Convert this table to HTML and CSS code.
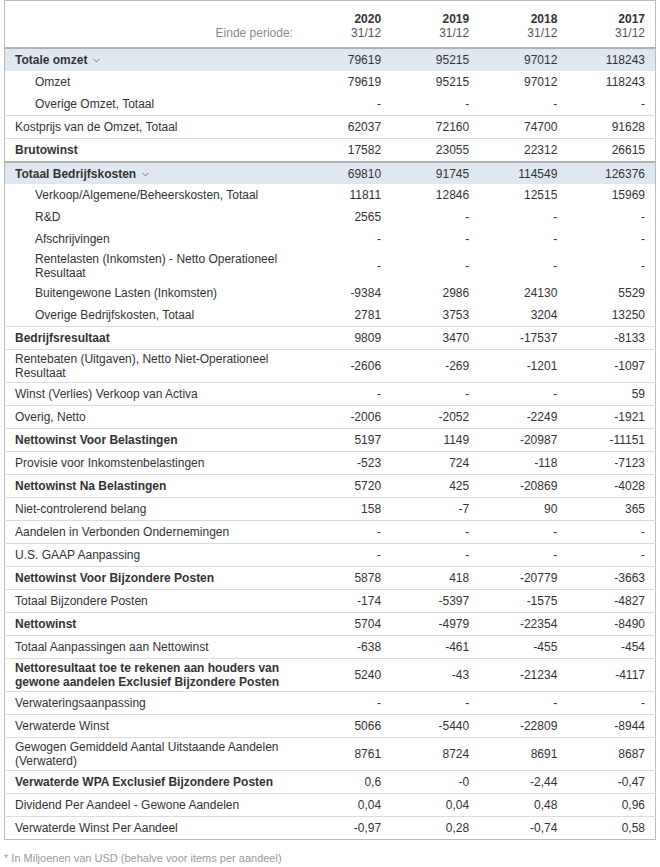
FILE: index.html
```html
<!DOCTYPE html>
<html lang="nl">
<head>
<meta charset="utf-8">
<title>Resultatenrekening</title>
<link rel="stylesheet" href="styles.css">
</head>
<body>
<table class="fin">
  <colgroup>
    <col class="c-label"><col class="c-num"><col class="c-num"><col class="c-num"><col class="c-num">
  </colgroup>
  <thead>
    <tr>
      <th class="lbl">Einde periode:</th>
      <th><span class="yr">2020</span><span class="dt">31/12</span></th>
      <th><span class="yr">2019</span><span class="dt">31/12</span></th>
      <th><span class="yr">2018</span><span class="dt">31/12</span></th>
      <th><span class="yr">2017</span><span class="dt">31/12</span></th>
    </tr>
  </thead>
  <tbody>
    <tr class="grp"><td>Totale omzet<svg class="chev" width="7" height="5" viewBox="0 0 7 5"><path d="M0.5 0.8 L3.5 3.8 L6.5 0.8" fill="none" stroke="#9a9a9a" stroke-width="1.1"/></svg></td><td>79619</td><td>95215</td><td>97012</td><td>118243</td></tr>
    <tr class="sub"><td>Omzet</td><td>79619</td><td>95215</td><td>97012</td><td>118243</td></tr>
    <tr class="sub"><td>Overige Omzet, Totaal</td><td>-</td><td>-</td><td>-</td><td>-</td></tr>
    <tr><td>Kostprijs van de Omzet, Totaal</td><td>62037</td><td>72160</td><td>74700</td><td>91628</td></tr>
    <tr class="b"><td>Brutowinst</td><td>17582</td><td>23055</td><td>22312</td><td>26615</td></tr>
    <tr class="grp"><td>Totaal Bedrijfskosten<svg class="chev" width="7" height="5" viewBox="0 0 7 5"><path d="M0.5 0.8 L3.5 3.8 L6.5 0.8" fill="none" stroke="#9a9a9a" stroke-width="1.1"/></svg></td><td>69810</td><td>91745</td><td>114549</td><td>126376</td></tr>
    <tr class="sub"><td>Verkoop/Algemene/Beheerskosten, Totaal</td><td>11811</td><td>12846</td><td>12515</td><td>15969</td></tr>
    <tr class="sub"><td>R&amp;D</td><td>2565</td><td>-</td><td>-</td><td>-</td></tr>
    <tr class="sub"><td>Afschrijvingen</td><td>-</td><td>-</td><td>-</td><td>-</td></tr>
    <tr class="sub"><td>Rentelasten (Inkomsten) - Netto Operationeel Resultaat</td><td>-</td><td>-</td><td>-</td><td>-</td></tr>
    <tr class="sub"><td>Buitengewone Lasten (Inkomsten)</td><td>-9384</td><td>2986</td><td>24130</td><td>5529</td></tr>
    <tr class="sub"><td>Overige Bedrijfskosten, Totaal</td><td>2781</td><td>3753</td><td>3204</td><td>13250</td></tr>
    <tr class="b"><td>Bedrijfsresultaat</td><td>9809</td><td>3470</td><td>-17537</td><td>-8133</td></tr>
    <tr><td>Rentebaten (Uitgaven), Netto Niet-Operationeel Resultaat</td><td>-2606</td><td>-269</td><td>-1201</td><td>-1097</td></tr>
    <tr><td>Winst (Verlies) Verkoop van Activa</td><td>-</td><td>-</td><td>-</td><td>59</td></tr>
    <tr><td>Overig, Netto</td><td>-2006</td><td>-2052</td><td>-2249</td><td>-1921</td></tr>
    <tr class="b"><td>Nettowinst Voor Belastingen</td><td>5197</td><td>1149</td><td>-20987</td><td>-11151</td></tr>
    <tr><td>Provisie voor Inkomstenbelastingen</td><td>-523</td><td>724</td><td>-118</td><td>-7123</td></tr>
    <tr class="b"><td>Nettowinst Na Belastingen</td><td>5720</td><td>425</td><td>-20869</td><td>-4028</td></tr>
    <tr><td>Niet-controlerend belang</td><td>158</td><td>-7</td><td>90</td><td>365</td></tr>
    <tr><td>Aandelen in Verbonden Ondernemingen</td><td>-</td><td>-</td><td>-</td><td>-</td></tr>
    <tr><td>U.S. GAAP Aanpassing</td><td>-</td><td>-</td><td>-</td><td>-</td></tr>
    <tr class="b"><td>Nettowinst Voor Bijzondere Posten</td><td>5878</td><td>418</td><td>-20779</td><td>-3663</td></tr>
    <tr><td>Totaal Bijzondere Posten</td><td>-174</td><td>-5397</td><td>-1575</td><td>-4827</td></tr>
    <tr class="b"><td>Nettowinst</td><td>5704</td><td>-4979</td><td>-22354</td><td>-8490</td></tr>
    <tr><td>Totaal Aanpassingen aan Nettowinst</td><td>-638</td><td>-461</td><td>-455</td><td>-454</td></tr>
    <tr class="b"><td>Nettoresultaat toe te rekenen aan houders van gewone aandelen Exclusief Bijzondere Posten</td><td>5240</td><td>-43</td><td>-21234</td><td>-4117</td></tr>
    <tr><td>Verwateringsaanpassing</td><td>-</td><td>-</td><td>-</td><td>-</td></tr>
    <tr><td>Verwaterde Winst</td><td>5066</td><td>-5440</td><td>-22809</td><td>-8944</td></tr>
    <tr><td>Gewogen Gemiddeld Aantal Uitstaande Aandelen (Verwaterd)</td><td>8761</td><td>8724</td><td>8691</td><td>8687</td></tr>
    <tr class="b"><td>Verwaterde WPA Exclusief Bijzondere Posten</td><td>0,6</td><td>-0</td><td>-2,44</td><td>-0,47</td></tr>
    <tr><td>Dividend Per Aandeel - Gewone Aandelen</td><td>0,04</td><td>0,04</td><td>0,48</td><td>0,96</td></tr>
    <tr><td>Verwaterde Winst Per Aandeel</td><td>-0,97</td><td>0,28</td><td>-0,74</td><td>0,58</td></tr>
  </tbody>
</table>
<p class="note">* In Miljoenen van USD (behalve voor items per aandeel)</p>
</body>
</html>
```

FILE: styles.css
```css
html, body {
  margin: 0;
  padding: 0;
  background: #ffffff;
}
body {
  padding: 0 4px;
  font-family: "Liberation Sans", Arial, sans-serif;
  font-size: 12px;
  color: #333333;
}
.fin {
  width: 652px;
  border-collapse: collapse;
  table-layout: fixed;
  border: 1px solid #bcbcbc;
}
.c-label { width: 298px; }
.c-num { width: 88px; }

.fin th {
  vertical-align: bottom;
  text-align: right;
  padding: 11px 10px 7px 0;
  line-height: 14px;
  font-weight: normal;
  border-bottom: 2px solid #b0b0b0;
}
.fin th.lbl {
  color: #8a8a8a;
  padding-right: 10px;
}
.yr {
  display: block;
  font-weight: bold;
  color: #333333;
}
.dt {
  display: block;
  color: #555555;
}

.fin td {
  height: 18px;
  padding: 2px 10px 2px 0;
  line-height: 14px;
  text-align: right;
  vertical-align: middle;
  border-top: 1px solid #dcdcdc;
}
.fin td:first-child {
  text-align: left;
  padding-left: 10px;
  padding-right: 10px;
}
.fin tr.sub td {
  border-top: none;
}
.fin tr.sub td:first-child {
  padding-left: 30px;
}
.fin tr.b td:first-child {
  font-weight: bold;
}
.fin tr.grp td {
  height: 17px;
  background: #dfe8f0;
  border-top: 2px solid #b0b0b0;
}
.fin tbody tr.grp:first-child td {
  height: 18px;
  border-top: none;
}
.fin tr.grp td:first-child {
  font-weight: bold;
}
.chev {
  margin-left: 6px;
  vertical-align: 1px;
}
.note {
  margin: 12px 0 0 0;
  font-size: 11px;
  line-height: 13px;
  color: #999999;
}
```
